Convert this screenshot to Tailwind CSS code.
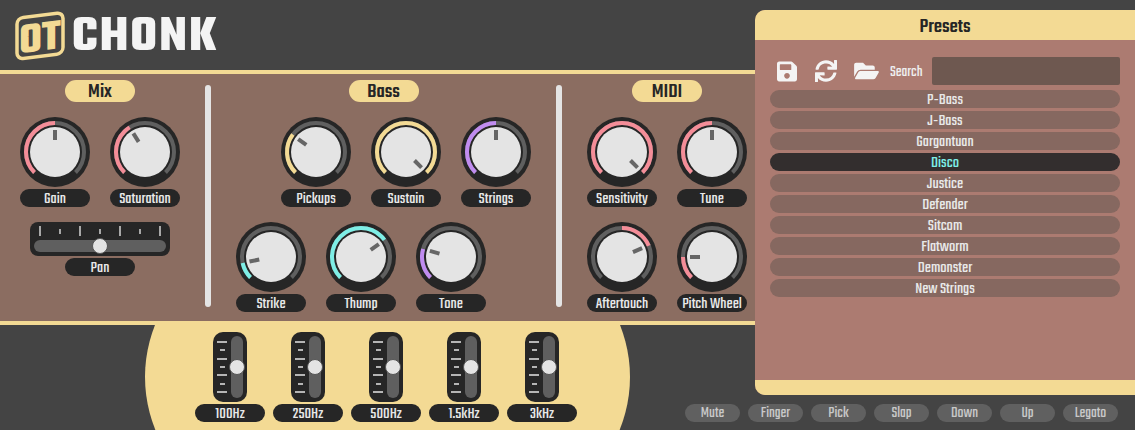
<!doctype html><html><head><meta charset="utf-8"><script src="https://cdn.jsdelivr.net/npm/@tailwindcss/browser@4"></script></head>
<body class="bg-[#444444]">
<div class="relative w-[1135px] h-[430px] overflow-hidden bg-[#444444] font-['Teko',sans-serif] text-[#e8e8e8]">

<header class="h-[70px] flex items-start pl-[14px]">
  <svg width="54" height="56" viewBox="0 0 54 56" class="block mt-[8px] overflow-visible">
    <g transform="translate(0 6.5) skewY(-7)">
      <rect x="3" y="4" width="46" height="41" rx="6" fill="none" stroke="#f3da94" stroke-width="3.5"/>
      <text x="26" y="39.5" text-anchor="middle" fill="#f3da94" font-family="Teko" font-weight="700" font-size="44">OT</text>
    </g>
  </svg>
  <div class="ml-[4px] mt-[12px] text-[52px] leading-[52px] font-bold tracking-[2px] text-[#f4f4f4]">CHONK</div>
</header>

<main class="h-[255px] border-y-4 border-[#f3da94] bg-[#8b6d61] flex">
  <section class="w-[200px] flex flex-col items-center pt-[6px]">
    <div class="w-[70px] h-[22px] rounded-full bg-[#f3da94] text-[#262626] text-[21px] leading-none font-medium flex items-center justify-center pt-[2px]">Mix</div>
    <div class="flex gap-[20px] mt-[15px]">
      <div class="w-[70px]">
        <svg width="70" height="70" viewBox="0 0 70 70" class="block"><circle cx="35" cy="35" r="35" fill="#262626"/><circle cx="35" cy="35" r="29" fill="none" stroke="#5f5f5f" stroke-width="4" pathLength="360" stroke-dasharray="270 90" transform="rotate(135 35 35)"/><circle cx="35" cy="35" r="29" fill="none" stroke="#f48d98" stroke-width="4" pathLength="360" stroke-dasharray="135 360" transform="rotate(135 35 35)"/><circle cx="35" cy="35" r="25" fill="#e4e4e4"/><rect x="33" y="13" width="4" height="10" fill="#666666"/></svg>
        <div class="mt-[2px] h-[18px] rounded-full bg-[#262626] text-[17px] leading-none flex items-center justify-center pt-[2px]">Gain</div>
      </div>
      <div class="w-[70px]">
        <svg width="70" height="70" viewBox="0 0 70 70" class="block"><circle cx="35" cy="35" r="35" fill="#262626"/><circle cx="35" cy="35" r="29" fill="none" stroke="#5f5f5f" stroke-width="4" pathLength="360" stroke-dasharray="270 90" transform="rotate(135 35 35)"/><circle cx="35" cy="35" r="29" fill="none" stroke="#f48d98" stroke-width="4" pathLength="360" stroke-dasharray="103 360" transform="rotate(135 35 35)"/><circle cx="35" cy="35" r="25" fill="#e4e4e4"/><rect x="33" y="13" width="4" height="10" fill="#666666" transform="rotate(-32 35 35)"/></svg>
        <div class="mt-[2px] h-[18px] rounded-full bg-[#262626] text-[17px] leading-none flex items-center justify-center pt-[2px]">Saturation</div>
      </div>
    </div>
    <div class="mt-[15px] w-[140px] h-[34px] rounded-[8px] bg-[#262626] relative px-[4px] pt-[4px]">
      <div class="h-[10px] flex items-center justify-between px-[5px]">
        <div class="w-[2px] h-[10px] bg-[#a8a8a8]"></div><div class="w-[2px] h-[5px] bg-[#a8a8a8]"></div><div class="w-[2px] h-[10px] bg-[#a8a8a8]"></div><div class="w-[2px] h-[5px] bg-[#a8a8a8]"></div><div class="w-[2px] h-[10px] bg-[#a8a8a8]"></div><div class="w-[2px] h-[5px] bg-[#a8a8a8]"></div><div class="w-[2px] h-[10px] bg-[#a8a8a8]"></div>
      </div>
      <div class="mt-[4px] h-[12px] rounded-full bg-[#5f5f5f]"></div>
      <div class="absolute left-[62px] top-[16px] w-[16px] h-[16px] rounded-full bg-[#e4e4e4] border border-[#555555]"></div>
    </div>
    <div class="mt-[2px] w-[70px] h-[18px] rounded-full bg-[#262626] text-[17px] leading-none flex items-center justify-center pt-[2px]">Pan</div>
  </section>

  <div class="ml-[5px] mt-[11px] w-[6px] h-[222px] rounded-full bg-[#e4e4e4]"></div>

  <section class="w-[345px] flex flex-col pt-[6px]">
    <div class="self-center w-[70px] h-[22px] rounded-full bg-[#f3da94] text-[#262626] text-[21px] leading-none font-medium flex items-center justify-center pt-[2px]">Bass</div>
    <div class="flex gap-[20px] mt-[15px] pl-[70px]">
      <div class="w-[70px]">
        <svg width="70" height="70" viewBox="0 0 70 70" class="block"><circle cx="35" cy="35" r="35" fill="#262626"/><circle cx="35" cy="35" r="29" fill="none" stroke="#5f5f5f" stroke-width="4" pathLength="360" stroke-dasharray="270 90" transform="rotate(135 35 35)"/><circle cx="35" cy="35" r="29" fill="none" stroke="#f3da94" stroke-width="4" pathLength="360" stroke-dasharray="82 360" transform="rotate(135 35 35)"/><circle cx="35" cy="35" r="25" fill="#e4e4e4"/><rect x="33" y="13" width="4" height="10" fill="#666666" transform="rotate(-54 35 35)"/></svg>
        <div class="mt-[2px] h-[18px] rounded-full bg-[#262626] text-[17px] leading-none flex items-center justify-center pt-[2px]">Pickups</div>
      </div>
      <div class="w-[70px]">
        <svg width="70" height="70" viewBox="0 0 70 70" class="block"><circle cx="35" cy="35" r="35" fill="#262626"/><circle cx="35" cy="35" r="29" fill="none" stroke="#5f5f5f" stroke-width="4" pathLength="360" stroke-dasharray="270 90" transform="rotate(135 35 35)"/><circle cx="35" cy="35" r="29" fill="none" stroke="#f3da94" stroke-width="4" pathLength="360" stroke-dasharray="270 90" transform="rotate(135 35 35)"/><circle cx="35" cy="35" r="25" fill="#e4e4e4"/><rect x="33" y="13" width="4" height="10" fill="#666666" transform="rotate(135 35 35)"/></svg>
        <div class="mt-[2px] h-[18px] rounded-full bg-[#262626] text-[17px] leading-none flex items-center justify-center pt-[2px]">Sustain</div>
      </div>
      <div class="w-[70px]">
        <svg width="70" height="70" viewBox="0 0 70 70" class="block"><circle cx="35" cy="35" r="35" fill="#262626"/><circle cx="35" cy="35" r="29" fill="none" stroke="#5f5f5f" stroke-width="4" pathLength="360" stroke-dasharray="270 90" transform="rotate(135 35 35)"/><circle cx="35" cy="35" r="29" fill="none" stroke="#c08cf0" stroke-width="4" pathLength="360" stroke-dasharray="135 360" transform="rotate(135 35 35)"/><circle cx="35" cy="35" r="25" fill="#e4e4e4"/><rect x="33" y="13" width="4" height="10" fill="#666666"/></svg>
        <div class="mt-[2px] h-[18px] rounded-full bg-[#262626] text-[17px] leading-none flex items-center justify-center pt-[2px]">Strings</div>
      </div>
    </div>
    <div class="flex gap-[20px] mt-[15px] pl-[25px]">
      <div class="w-[70px]">
        <svg width="70" height="70" viewBox="0 0 70 70" class="block"><circle cx="35" cy="35" r="35" fill="#262626"/><circle cx="35" cy="35" r="29" fill="none" stroke="#5f5f5f" stroke-width="4" pathLength="360" stroke-dasharray="270 90" transform="rotate(135 35 35)"/><circle cx="35" cy="35" r="29" fill="none" stroke="#7eeee6" stroke-width="4" pathLength="360" stroke-dasharray="33 360" transform="rotate(135 35 35)"/><circle cx="35" cy="35" r="25" fill="#e4e4e4"/><rect x="33" y="13" width="4" height="10" fill="#666666" transform="rotate(-102 35 35)"/></svg>
        <div class="mt-[2px] h-[18px] rounded-full bg-[#262626] text-[17px] leading-none flex items-center justify-center pt-[2px]">Strike</div>
      </div>
      <div class="w-[70px]">
        <svg width="70" height="70" viewBox="0 0 70 70" class="block"><circle cx="35" cy="35" r="35" fill="#262626"/><circle cx="35" cy="35" r="29" fill="none" stroke="#5f5f5f" stroke-width="4" pathLength="360" stroke-dasharray="270 90" transform="rotate(135 35 35)"/><circle cx="35" cy="35" r="29" fill="none" stroke="#7eeee6" stroke-width="4" pathLength="360" stroke-dasharray="189 360" transform="rotate(135 35 35)"/><circle cx="35" cy="35" r="25" fill="#e4e4e4"/><rect x="33" y="13" width="4" height="10" fill="#666666" transform="rotate(54 35 35)"/></svg>
        <div class="mt-[2px] h-[18px] rounded-full bg-[#262626] text-[17px] leading-none flex items-center justify-center pt-[2px]">Thump</div>
      </div>
      <div class="w-[70px]">
        <svg width="70" height="70" viewBox="0 0 70 70" class="block"><circle cx="35" cy="35" r="35" fill="#262626"/><circle cx="35" cy="35" r="29" fill="none" stroke="#5f5f5f" stroke-width="4" pathLength="360" stroke-dasharray="270 90" transform="rotate(135 35 35)"/><circle cx="35" cy="35" r="29" fill="none" stroke="#c08cf0" stroke-width="4" pathLength="360" stroke-dasharray="61 360" transform="rotate(135 35 35)"/><circle cx="35" cy="35" r="25" fill="#e4e4e4"/><rect x="33" y="13" width="4" height="10" fill="#666666" transform="rotate(-74 35 35)"/></svg>
        <div class="mt-[2px] h-[18px] rounded-full bg-[#262626] text-[17px] leading-none flex items-center justify-center pt-[2px]">Tone</div>
      </div>
    </div>
  </section>

  <div class="mt-[11px] w-[6px] h-[222px] rounded-full bg-[#e4e4e4]"></div>

  <section class="w-[210px] flex flex-col pt-[6px] items-center">
    <div class="w-[70px] h-[22px] rounded-full bg-[#f3da94] text-[#262626] text-[21px] leading-none font-medium flex items-center justify-center pt-[2px]">MIDI</div>
    <div class="flex gap-[20px] mt-[15px]">
      <div class="w-[70px]">
        <svg width="70" height="70" viewBox="0 0 70 70" class="block"><circle cx="35" cy="35" r="35" fill="#262626"/><circle cx="35" cy="35" r="29" fill="none" stroke="#5f5f5f" stroke-width="4" pathLength="360" stroke-dasharray="270 90" transform="rotate(135 35 35)"/><circle cx="35" cy="35" r="29" fill="none" stroke="#f48d98" stroke-width="4" pathLength="360" stroke-dasharray="270 90" transform="rotate(135 35 35)"/><circle cx="35" cy="35" r="25" fill="#e4e4e4"/><rect x="33" y="13" width="4" height="10" fill="#666666" transform="rotate(135 35 35)"/></svg>
        <div class="mt-[2px] h-[18px] rounded-full bg-[#262626] text-[17px] leading-none flex items-center justify-center pt-[2px]">Sensitivity</div>
      </div>
      <div class="w-[70px]">
        <svg width="70" height="70" viewBox="0 0 70 70" class="block"><circle cx="35" cy="35" r="35" fill="#262626"/><circle cx="35" cy="35" r="29" fill="none" stroke="#5f5f5f" stroke-width="4" pathLength="360" stroke-dasharray="270 90" transform="rotate(135 35 35)"/><circle cx="35" cy="35" r="29" fill="none" stroke="#f48d98" stroke-width="4" pathLength="360" stroke-dasharray="135 360" transform="rotate(135 35 35)"/><circle cx="35" cy="35" r="25" fill="#e4e4e4"/><rect x="33" y="13" width="4" height="10" fill="#666666"/></svg>
        <div class="mt-[2px] h-[18px] rounded-full bg-[#262626] text-[17px] leading-none flex items-center justify-center pt-[2px]">Tune</div>
      </div>
    </div>
    <div class="flex gap-[20px] mt-[15px]">
      <div class="w-[70px]">
        <svg width="70" height="70" viewBox="0 0 70 70" class="block"><circle cx="35" cy="35" r="35" fill="#262626"/><circle cx="35" cy="35" r="29" fill="none" stroke="#5f5f5f" stroke-width="4" pathLength="360" stroke-dasharray="270 90" transform="rotate(135 35 35)"/><circle cx="35" cy="35" r="29" fill="none" stroke="#f48d98" stroke-width="4" pathLength="360" stroke-dasharray="67 360" transform="rotate(270 35 35)"/><circle cx="35" cy="35" r="25" fill="#e4e4e4"/><rect x="33" y="13" width="4" height="10" fill="#666666" transform="rotate(66 35 35)"/></svg>
        <div class="mt-[2px] h-[18px] rounded-full bg-[#262626] text-[17px] leading-none flex items-center justify-center pt-[2px]">Aftertouch</div>
      </div>
      <div class="w-[70px]">
        <svg width="70" height="70" viewBox="0 0 70 70" class="block"><circle cx="35" cy="35" r="35" fill="#262626"/><circle cx="35" cy="35" r="29" fill="none" stroke="#5f5f5f" stroke-width="4" pathLength="360" stroke-dasharray="270 90" transform="rotate(135 35 35)"/><circle cx="35" cy="35" r="29" fill="none" stroke="#f48d98" stroke-width="4" pathLength="360" stroke-dasharray="45 360" transform="rotate(135 35 35)"/><circle cx="35" cy="35" r="25" fill="#e4e4e4"/><rect x="33" y="13" width="4" height="10" fill="#666666" transform="rotate(-90 35 35)"/></svg>
        <div class="mt-[2px] h-[18px] rounded-full bg-[#262626] text-[17px] leading-none flex items-center justify-center pt-[2px]">Pitch Wheel</div>
      </div>
    </div>
  </section>
</main>

<footer class="relative h-[105px] overflow-hidden flex pt-[7px] pl-[195px] pr-[17px]">
  <div class="absolute left-[145px] top-[-131px] w-[485px] h-[366px] rounded-[50%] bg-[#f3da94]"></div>
  <div class="relative flex gap-[8px]">
    <div class="w-[70px] flex flex-col items-center">
      <div class="relative w-[34px] h-[70px] rounded-[10px] bg-[#262626] flex pt-[4px] pl-[4px]">
        <div class="w-[10px] h-[52px] mt-[5px] flex flex-col items-center justify-between"><div class="w-[10px] h-[2px] bg-[#b5b5b5]"></div><div class="w-[5px] h-[2px] bg-[#b5b5b5]"></div><div class="w-[10px] h-[2px] bg-[#b5b5b5]"></div><div class="w-[5px] h-[2px] bg-[#b5b5b5]"></div><div class="w-[10px] h-[2px] bg-[#b5b5b5]"></div><div class="w-[5px] h-[2px] bg-[#b5b5b5]"></div><div class="w-[10px] h-[2px] bg-[#b5b5b5]"></div></div>
        <div class="ml-[4px] w-[12px] h-[62px] rounded-full bg-[#5f5f5f]"></div>
        <div class="absolute left-[16px] top-[27px] w-[16px] h-[16px] rounded-full bg-[#e4e4e4] border border-[#555555]"></div>
      </div>
      <div class="mt-[2px] w-[70px] h-[18px] rounded-full bg-[#262626] text-[17px] leading-none flex items-center justify-center pt-[2px]">100Hz</div>
    </div>
    <div class="w-[70px] flex flex-col items-center">
      <div class="relative w-[34px] h-[70px] rounded-[10px] bg-[#262626] flex pt-[4px] pl-[4px]">
        <div class="w-[10px] h-[52px] mt-[5px] flex flex-col items-center justify-between"><div class="w-[10px] h-[2px] bg-[#b5b5b5]"></div><div class="w-[5px] h-[2px] bg-[#b5b5b5]"></div><div class="w-[10px] h-[2px] bg-[#b5b5b5]"></div><div class="w-[5px] h-[2px] bg-[#b5b5b5]"></div><div class="w-[10px] h-[2px] bg-[#b5b5b5]"></div><div class="w-[5px] h-[2px] bg-[#b5b5b5]"></div><div class="w-[10px] h-[2px] bg-[#b5b5b5]"></div></div>
        <div class="ml-[4px] w-[12px] h-[62px] rounded-full bg-[#5f5f5f]"></div>
        <div class="absolute left-[16px] top-[27px] w-[16px] h-[16px] rounded-full bg-[#e4e4e4] border border-[#555555]"></div>
      </div>
      <div class="mt-[2px] w-[70px] h-[18px] rounded-full bg-[#262626] text-[17px] leading-none flex items-center justify-center pt-[2px]">250Hz</div>
    </div>
    <div class="w-[70px] flex flex-col items-center">
      <div class="relative w-[34px] h-[70px] rounded-[10px] bg-[#262626] flex pt-[4px] pl-[4px]">
        <div class="w-[10px] h-[52px] mt-[5px] flex flex-col items-center justify-between"><div class="w-[10px] h-[2px] bg-[#b5b5b5]"></div><div class="w-[5px] h-[2px] bg-[#b5b5b5]"></div><div class="w-[10px] h-[2px] bg-[#b5b5b5]"></div><div class="w-[5px] h-[2px] bg-[#b5b5b5]"></div><div class="w-[10px] h-[2px] bg-[#b5b5b5]"></div><div class="w-[5px] h-[2px] bg-[#b5b5b5]"></div><div class="w-[10px] h-[2px] bg-[#b5b5b5]"></div></div>
        <div class="ml-[4px] w-[12px] h-[62px] rounded-full bg-[#5f5f5f]"></div>
        <div class="absolute left-[16px] top-[27px] w-[16px] h-[16px] rounded-full bg-[#e4e4e4] border border-[#555555]"></div>
      </div>
      <div class="mt-[2px] w-[70px] h-[18px] rounded-full bg-[#262626] text-[17px] leading-none flex items-center justify-center pt-[2px]">500Hz</div>
    </div>
    <div class="w-[70px] flex flex-col items-center">
      <div class="relative w-[34px] h-[70px] rounded-[10px] bg-[#262626] flex pt-[4px] pl-[4px]">
        <div class="w-[10px] h-[52px] mt-[5px] flex flex-col items-center justify-between"><div class="w-[10px] h-[2px] bg-[#b5b5b5]"></div><div class="w-[5px] h-[2px] bg-[#b5b5b5]"></div><div class="w-[10px] h-[2px] bg-[#b5b5b5]"></div><div class="w-[5px] h-[2px] bg-[#b5b5b5]"></div><div class="w-[10px] h-[2px] bg-[#b5b5b5]"></div><div class="w-[5px] h-[2px] bg-[#b5b5b5]"></div><div class="w-[10px] h-[2px] bg-[#b5b5b5]"></div></div>
        <div class="ml-[4px] w-[12px] h-[62px] rounded-full bg-[#5f5f5f]"></div>
        <div class="absolute left-[16px] top-[27px] w-[16px] h-[16px] rounded-full bg-[#e4e4e4] border border-[#555555]"></div>
      </div>
      <div class="mt-[2px] w-[70px] h-[18px] rounded-full bg-[#262626] text-[17px] leading-none flex items-center justify-center pt-[2px]">1.5kHz</div>
    </div>
    <div class="w-[70px] flex flex-col items-center">
      <div class="relative w-[34px] h-[70px] rounded-[10px] bg-[#262626] flex pt-[4px] pl-[4px]">
        <div class="w-[10px] h-[52px] mt-[5px] flex flex-col items-center justify-between"><div class="w-[10px] h-[2px] bg-[#b5b5b5]"></div><div class="w-[5px] h-[2px] bg-[#b5b5b5]"></div><div class="w-[10px] h-[2px] bg-[#b5b5b5]"></div><div class="w-[5px] h-[2px] bg-[#b5b5b5]"></div><div class="w-[10px] h-[2px] bg-[#b5b5b5]"></div><div class="w-[5px] h-[2px] bg-[#b5b5b5]"></div><div class="w-[10px] h-[2px] bg-[#b5b5b5]"></div></div>
        <div class="ml-[4px] w-[12px] h-[62px] rounded-full bg-[#5f5f5f]"></div>
        <div class="absolute left-[16px] top-[27px] w-[16px] h-[16px] rounded-full bg-[#e4e4e4] border border-[#555555]"></div>
      </div>
      <div class="mt-[2px] w-[70px] h-[18px] rounded-full bg-[#262626] text-[17px] leading-none flex items-center justify-center pt-[2px]">3kHz</div>
    </div>
  </div>
  <div class="relative ml-auto mt-[72px] flex gap-[8px] h-[18px] text-[#c8c8c8] text-[16px] leading-none">
    <div class="w-[55px] rounded-full bg-[#606060] flex items-center justify-center pt-[2px]">Mute</div>
    <div class="w-[55px] rounded-full bg-[#606060] flex items-center justify-center pt-[2px]">Finger</div>
    <div class="w-[55px] rounded-full bg-[#606060] flex items-center justify-center pt-[2px]">Pick</div>
    <div class="w-[55px] rounded-full bg-[#606060] flex items-center justify-center pt-[2px]">Slap</div>
    <div class="w-[55px] rounded-full bg-[#606060] flex items-center justify-center pt-[2px]">Down</div>
    <div class="w-[55px] rounded-full bg-[#606060] flex items-center justify-center pt-[2px]">Up</div>
    <div class="w-[55px] rounded-full bg-[#606060] flex items-center justify-center pt-[2px]">Legato</div>
  </div>
</footer>

<aside class="absolute left-[755px] top-[10px] w-[380px] h-[385px] rounded-l-[10px] overflow-hidden bg-[#ac7b71] flex flex-col">
  <div class="h-[30px] bg-[#f3da94] text-[#262626] text-[21px] leading-none font-medium flex items-center justify-center pt-[4px]">Presets</div>
  <div class="flex-1 px-[15px] pt-[17px]">
    <div class="h-[28px] flex items-center pl-[6px]">
      <svg width="20" height="23" viewBox="0 0 448 512" class="block ml-[1px]"><path fill="#f4f4f4" d="M433.941 129.941l-83.882-83.882A48 48 0 0 0 316.118 32H48C21.49 32 0 53.49 0 80v352c0 26.51 21.49 48 48 48h352c26.51 0 48-21.49 48-48V163.882a48 48 0 0 0-14.059-33.941zM224 416c-35.346 0-64-28.654-64-64 0-35.346 28.654-64 64-64s64 28.654 64 64c0 35.346-28.654 64-64 64zm96-304.52V212c0 6.627-5.373 12-12 12H76c-6.627 0-12-5.373-12-12V108c0-6.627 5.373-12 12-12h228.52c3.183 0 6.235 1.264 8.485 3.515l3.48 3.48A11.996 11.996 0 0 1 320 111.48z"/></svg>
      <svg width="22" height="22" viewBox="0 0 512 512" class="block ml-[18px]"><path fill="#f4f4f4" d="M440.65 12.57l4 82.77A247.16 247.16 0 0 0 255.83 8C134.73 8 33.91 94.92 12.29 209.82A12 12 0 0 0 24.09 224h49.05a12 12 0 0 0 11.67-9.26 175.91 175.91 0 0 1 317-56.94l-101.46-4.86a12 12 0 0 0-12.57 12v47.41a12 12 0 0 0 12 12H500a12 12 0 0 0 12-12V12a12 12 0 0 0-12-12h-47.37a12 12 0 0 0-11.98 12.57zM255.83 432a175.61 175.61 0 0 1-146-77.8l101.8 4.87a12 12 0 0 0 12.57-12v-47.4a12 12 0 0 0-12-12H12a12 12 0 0 0-12 12V500a12 12 0 0 0 12 12h47.35a12 12 0 0 0 12-12.6l-4.15-82.57A247.17 247.17 0 0 0 255.83 504c121.11 0 221.93-86.92 243.55-201.82a12 12 0 0 0-11.8-14.18h-49.05a12 12 0 0 0-11.67 9.26A175.86 175.86 0 0 1 255.83 432z"/></svg>
      <svg width="25" height="22" viewBox="0 0 576 512" class="block ml-[17px]"><path fill="#f4f4f4" d="M572.694 292.093L500.27 416.248A63.997 63.997 0 0 1 444.989 448H45.025c-18.523 0-30.064-20.093-20.731-36.093l72.424-124.155A64 64 0 0 1 152 256h399.964c18.523 0 30.064 20.093 20.73 36.093zM152 224h328v-48c0-26.51-21.49-48-48-48H272l-64-64H48C21.49 64 0 85.49 0 112v278.046l69.077-118.418C86.214 242.25 117.989 224 152 224z"/></svg>
      <span class="ml-[11px] w-[42px] text-[16px] leading-none pt-[3px] text-[#eeeeee]">Search</span>
      <div class="w-[188px] h-[28px] rounded-[2px] bg-[#6e5850]"></div>
    </div>
    <ul class="mt-[5px] flex flex-col gap-[3px] text-[17px] leading-none">
      <li class="h-[18px] rounded-full bg-[#866860] flex items-center justify-center pt-[2px]">P-Bass</li>
      <li class="h-[18px] rounded-full bg-[#866860] flex items-center justify-center pt-[2px]">J-Bass</li>
      <li class="h-[18px] rounded-full bg-[#866860] flex items-center justify-center pt-[2px]">Gargantuan</li>
      <li class="h-[18px] rounded-full bg-[#332e2e] text-[#7eeee6] flex items-center justify-center pt-[2px]">Disco</li>
      <li class="h-[18px] rounded-full bg-[#866860] flex items-center justify-center pt-[2px]">Justice</li>
      <li class="h-[18px] rounded-full bg-[#866860] flex items-center justify-center pt-[2px]">Defender</li>
      <li class="h-[18px] rounded-full bg-[#866860] flex items-center justify-center pt-[2px]">Sitcom</li>
      <li class="h-[18px] rounded-full bg-[#866860] flex items-center justify-center pt-[2px]">Flatworm</li>
      <li class="h-[18px] rounded-full bg-[#866860] flex items-center justify-center pt-[2px]">Demonster</li>
      <li class="h-[18px] rounded-full bg-[#866860] flex items-center justify-center pt-[2px]">New Strings</li>
    </ul>
  </div>
  <div class="h-[15px] bg-[#f3da94]"></div>
</aside>
</div>
</body></html>
